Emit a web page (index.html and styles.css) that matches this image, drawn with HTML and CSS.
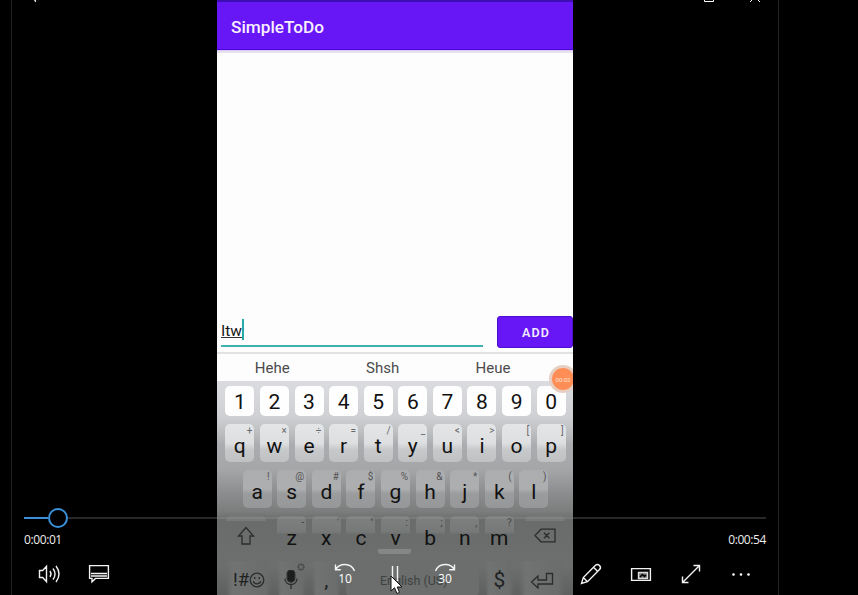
FILE: index.html
```html
<!DOCTYPE html>
<html lang="en">
<head>
<meta charset="utf-8">
<title>SimpleToDo</title>
<link rel="stylesheet" href="styles.css">
</head>
<body>
<main class="player">
  <section class="phone">
    <div class="status"></div>
    <header class="appbar">SimpleToDo</header>
    <div class="list"></div>
    <div class="entry">
      <div class="field"><span class="typed">Itw</span><span class="caret"></span></div>
      <div class="add">ADD</div>
    </div>
    <div class="suggestions"><span>Hehe</span><span>Shsh</span><span>Heue</span></div>
    <div class="keyboard">
      <div class="row numbers"><b>1</b><b>2</b><b>3</b><b>4</b><b>5</b><b>6</b><b>7</b><b>8</b><b>9</b><b>0</b></div>
      <div class="row qrow"><b>q<i>+</i></b><b>w<i>×</i></b><b>e<i>÷</i></b><b>r<i>=</i></b><b>t<i>/</i></b><b>y<i>_</i></b><b>u<i>&lt;</i></b><b>i<i>&gt;</i></b><b>o<i>[</i></b><b>p<i>]</i></b></div>
      <div class="row arow"><b>a<i>!</i></b><b>s<i>@</i></b><b>d<i>#</i></b><b>f<i>$</i></b><b>g<i>%</i></b><b>h<i>&amp;</i></b><b>j<i>*</i></b><b>k<i>(</i></b><b>l<i>)</i></b></div>
      <div class="row zrow">
        <b class="wide shift"><svg width="18" height="20" viewBox="0 0 18 20"><path d="M9 1.5 1.500 10H5v8h8v-8h3.500z"/></svg></b>
        <b>z<i>-</i></b><b>x<i>'</i></b><b>c<i>"</i></b><b>v<i>:</i></b><b>b<i>;</i></b><b>n<i>,</i></b><b>m<i>?</i></b>
        <b class="wide erase"><svg width="22" height="15" viewBox="0 0 22 15"><path d="M7 1.200h14v12.600H7L1 7.500zM10 4.800l5.400 5.400M15.400 4.800 10 10.200"/></svg></b>
      </div>
      <div class="row bottom">
        <b class="sym">!#<svg width="16" height="16" viewBox="0 0 16 16"><circle cx="8" cy="8" r="6.800"/><path d="M4.200 9.300c1.200 3.400 6.400 3.400 7.600 0M5.700 5v2M10.300 5v2"/></svg></b>
        <b class="mic"><svg class="micglyph" width="14" height="20" viewBox="0 0 14 20"><rect x="3.200" y="0" width="7.600" height="12" rx="3.800" fill="#1c1e1e"/><path d="M1 8.500c0 8 12 8 12 0M7 14.500V19"/></svg><svg class="gear" width="8" height="8" viewBox="0 0 8 8"><circle cx="4" cy="4" r="2.500"/><path d="M4 0v1.500M4 6.500V8M0 4h1.500M6.500 4H8M1.200 1.200l1 1M5.800 5.800l1 1M1.200 6.800l1-1M5.800 2.200l1-1"/></svg></b>
        <b class="comma">,</b>
        <b class="space">English (US)</b>
        <b class="dollar">$</b>
        <b class="enter"><svg width="24" height="17" viewBox="0 0 24 17"><path d="M1.500 10 8 4v4h8.500V1.500h6V12H8v4z"/></svg></b>
      </div>
      <div class="grip"></div>
    </div>
    <div class="recorder">00:02</div>
  </section>

  <svg class="caption back" width="5" height="2" viewBox="0 0 5 2"><path d="M1 0h2v2H2z" fill="#ddd"/></svg>
  <svg class="caption maximize" width="10" height="2" viewBox="0 0 10 2"><path d="M.5 0v1.500h9V0" fill="none" stroke="#fff"/></svg>
  <svg class="caption close" width="10" height="2" viewBox="0 0 10 2"><path d="M2 0 0 2M8 0l2 2" fill="none" stroke="#fff"/></svg>

  <section class="controls">
    <div class="track"><div class="played"></div><div class="thumb"></div><div class="remaining"></div></div>
    <div class="times"><span>0:00:01</span><span>0:00:54</span></div>
    <div class="buttons">
      <svg width="50" height="40" viewBox="0 0 50 40"><path d="M15.500 16.500h3.200l3.800-4.200v15.400l-3.800-4.200h-3.200zM26 17q2 3 0 6M29 14.500q4 5.500 0 11M32 12q6 8 0 16"/></svg>
      <svg width="50" height="40" viewBox="0 0 50 40"><path d="M15.600 11.600h18.800v12.800H21.500L18 27.800v-3.400h-2.400z"/><path d="M17 19.500h16M17 22h16"/></svg>
      <div class="transport">
        <svg width="30" height="40" viewBox="0 0 30 40"><path d="M5.500 10.500v5.300h5.300M5.700 15.600C9 9 21 8 24.500 17"/><text x="15" y="29">10</text></svg>
        <svg width="14" height="40" viewBox="0 0 14 40"><path d="M4.500 12v15M9.500 12v15"/></svg>
        <svg width="30" height="40" viewBox="0 0 30 40"><path d="M24.500 10.500v5.300h-5.300M24.300 15.600C21 9 9 8 5.500 17"/><text x="15" y="29">30</text></svg>
      </div>
      <svg width="50" height="40" viewBox="0 0 50 40"><path d="m15.500 29.500 1.800-6L29.500 11.300q2-1.800 4 .1 2 2.100 0 4.200L21.500 27.700zM17.300 23.500l4.200 4.200M27.500 13.300l4.300 4.200"/></svg>
      <svg width="50" height="40" viewBox="0 0 50 40"><path d="M15.600 14.600h18.800v11.800H15.600z"/><path d="M22.500 18.500h9v6h-9z" fill="#777" stroke="#ddd"/><path d="m24 23 2.500-2.500 2 2 1.500-1.500" stroke="#000"/></svg>
      <svg width="50" height="40" viewBox="0 0 50 40"><path d="m16.500 28.500 17-17M27.500 11.500h6v6M16.500 22.500v6h6"/></svg>
      <svg width="50" height="40" viewBox="0 0 50 40"><g fill="#fff" stroke="none"><circle cx="17.500" cy="20.500" r="1.300"/><circle cx="25" cy="20.500" r="1.300"/><circle cx="32.500" cy="20.500" r="1.300"/></g></svg>
    </div>
  </section>
  <svg class="pointer" width="13" height="20" viewBox="0 0 13 20"><path d="M1 1v15l3.500-3.300L7 18.500l2.500-1.100L7.200 12H12z" fill="#fff" stroke="#111"/></svg>
</main>
</body>
</html>
```
FILE: styles.css
```css
* { box-sizing: border-box; }
body { margin: 0; width: 858px; height: 595px; overflow: hidden; background: #000; font-family: Roboto, "Liberation Sans", sans-serif; }
.player { position: relative; width: 768px; height: 595px; margin-left: 11px; border-left: 1px solid #222; border-right: 1px solid #222; overflow: hidden; }
.phone { position: relative; display: flex; flex-direction: column; width: 356px; height: 595px; margin-left: 205px; background: #fdfdfd; overflow: hidden; }
.status { flex: none; height: 2px; background: #3e0eb4; }
.appbar { flex: none; height: 51px; padding-left: 14px; background: linear-gradient(#6716f5 47px, #4b06dc 47px 48px, #dcc5fa 48px 49px, #e6e2e9 49px); color: #f7efff; font-size: 17.2px; font-weight: 500; line-height: 50px; }
.list { flex: 1; }
.entry { flex: none; display: flex; justify-content: space-between; height: 36px; padding-left: 4px; }
.field { display: flex; align-items: flex-start; width: 262px; height: 31px; border-bottom: 2px solid #3eb0ad; }
.typed { margin-top: 5px; height: 17px; border-bottom: 1px solid #333; color: #151515; font-size: 15.5px; line-height: 20px; }
.caret { width: 2px; height: 21px; margin-top: 3px; background: #28aaa7; }
.add { width: 76px; height: 32px; border: 1px solid #4e0ed0; border-radius: 3px; background: #6716f5; color: #f3eaff; font-size: 12.5px; font-weight: 600; letter-spacing: 1.2px; line-height: 31px; text-align: center; padding-left: 2px; }
.suggestions { flex: none; display: flex; height: 29px; border-top: 2px solid #e2e2e2; color: #4b4b4b; font-size: 15px; line-height: 28px; text-align: center; }
.suggestions span { width: 110.4px; }
.keyboard { position: relative; flex: none; display: flex; flex-direction: column; height: 214px; padding: 5px 0 0 1px; background: linear-gradient(#dadcdf 0, #ced0d3 35px, #c2c3c5 48px, #abacaf 64px, #a4a6a8 88px, #8b8d8e 112px, #7c7e7e 130px, #696c6b 139px, #6c6f6e 184px, #5d605f 214px); }
.row { flex: none; display: flex; justify-content: center; gap: 5.600px; height: 46px; }
.row b { position: relative; width: 29px; height: 38px; border-radius: 5px; color: #111; font-size: 21px; font-weight: 400; line-height: 45px; text-align: center; }
.row i { position: absolute; top: 1px; right: 2px; color: #66686b; font-size: 10px; font-style: normal; line-height: 12px; }
.numbers { height: 38px; }
.numbers b { height: 30px; background: #fefefe; line-height: 32px; }
.qrow b { background: linear-gradient(#e4e5e6 0, #dedfe0 50%, #c7c8ca 68%, #c0c1c3); }
.arow b { background: linear-gradient(#acadaf 0, #adaeb0 50%, #9b9c9d 62%, #969798); }
.arow i { color: #555; }
.zrow { height: 45px; }
.zrow b { background: linear-gradient(#7e8080 0, #777979 42%, transparent 48%); }
.zrow b:not(.wide) { line-height: 44px; }
.zrow i { color: #3f4141; }
.zrow .wide { width: 40px; background: linear-gradient(#787a7a 5px, transparent 5px); }
.row svg { fill: none; stroke: #2b2d2d; stroke-width: 1.300; }
.wide svg { display: block; margin: 10px auto 0; }
.shift { margin-right: 6px; }
.erase { margin-left: 6px; }
.zrow .erase svg { margin-top: 12px; }
.bottom b { line-height: 39px; height: 34px; border-radius: 3px; background: linear-gradient(90deg, transparent, #707372 15%, #6a6d6c 85%, transparent); color: #202222; }
.bottom .sym { width: 46px; font-size: 18.5px; white-space: nowrap; }
.sym svg { vertical-align: -2px; margin-right: -1px; }
.mic .micglyph { display: block; margin: 9px 0 0 7px; }
.mic .gear { position: absolute; top: 2px; right: 1px; stroke-width: 1; opacity: .6; }
.bottom .space { width: 133px; padding-left: 2px; background: #6b6e6d; color: #3f4241; font-size: 12.500px; }
.bottom .enter { width: 46px; }
.enter svg { display: block; margin: 11px auto 0; }
.grip { position: absolute; top: 168px; left: 161px; width: 33px; height: 5px; border-radius: 0 0 3px 3px; background: #858787; }
.recorder { position: absolute; left: 332px; top: 365px; width: 28px; height: 28px; border: 3px solid #e6cfc3; border-radius: 50%; background: #ff8d56; color: #ffe3d4; font-size: 6px; line-height: 23px; text-align: center; }
.caption { position: absolute; top: 0; }
.back { left: 21px; }
.maximize { left: 692px; }
.close { left: 738px; }
.controls { position: absolute; left: 12px; right: 12px; top: 507px; height: 88px; }
.track { display: flex; align-items: center; height: 22px; }
.played { width: 24px; height: 2px; background: #3990d8; }
.thumb { width: 20px; height: 20px; border: 2px solid #3990d8; border-radius: 50%; }
.remaining { flex: 1; height: 2px; background: rgba(155,155,155,.26); }
.times { display: flex; justify-content: space-between; color: #eee; font: 12px/22px "Open Sans", sans-serif; letter-spacing: -.4px; }
.buttons { display: flex; height: 40px; margin-top: 3px; }
.buttons svg { flex: none; fill: none; stroke: #f3f3f3; stroke-width: 1.400; }
.transport { display: flex; width: 442px; padding-left: 206px; gap: 28px; }
.transport text { fill: #fff; stroke: none; font: 12px "Open Sans", sans-serif; text-anchor: middle; }
.pointer { position: absolute; left: 378px; top: 575px; }
```
